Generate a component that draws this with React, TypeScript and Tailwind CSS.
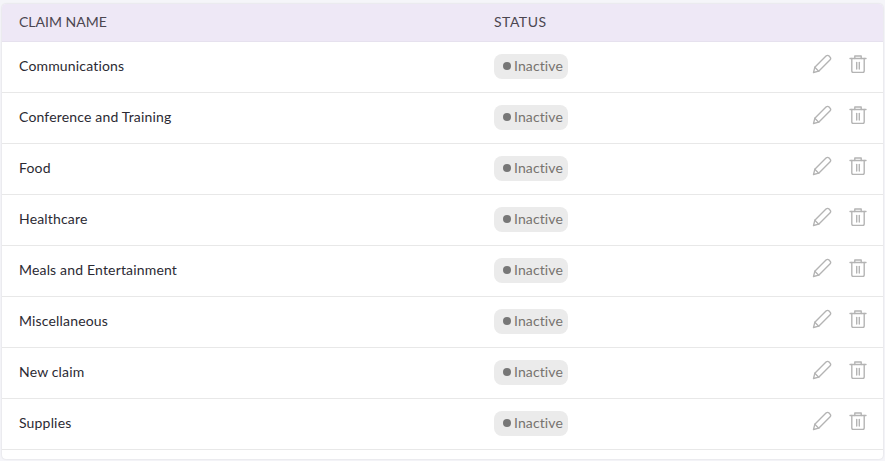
const claims = [
  "Communications",
  "Conference and Training",
  "Food",
  "Healthcare",
  "Meals and Entertainment",
  "Miscellaneous",
  "New claim",
  "Supplies",
];

function PencilIcon() {
  return (
    <svg width="20" height="20" viewBox="0 0 20 20" fill="none" stroke="#b4b4b4" strokeWidth="1.35" strokeLinejoin="round" strokeLinecap="round">
      <path d="M1.5 18.5l1.3-5.2L14 2.1c.9-.9 2.2-.9 3.1 0l.8.8c.9.9.9 2.2 0 3.1L6.7 17.2l-5.2 1.3z" />
      <path d="M2.8 13.3l3.9 3.9" />
    </svg>
  );
}

function TrashIcon() {
  return (
    <svg width="18" height="18" viewBox="0 0 18 18" fill="none" stroke="#b4b4b4" strokeWidth="1.4" strokeLinejoin="round" strokeLinecap="round">
      <path d="M1 3.5h16" />
      <path d="M5.8 3.5V1h6.4v2.5" />
      <path d="M2.8 3.5V16c0 .9.6 1.5 1.5 1.5h9.4c.9 0 1.5-.6 1.5-1.5V3.5" />
      <path d="M7.7 7.5V14" />
      <path d="M10.3 7.5V14" />
    </svg>
  );
}

export default function App() {
  return (
    <div className="w-[885px] h-[461px] overflow-hidden bg-[#f5f5f9] pt-[4px] pl-[2px] font-['Lato','Noto_Sans',sans-serif]">
      <div className="w-[881px] h-[455px] bg-white rounded-[4px] overflow-hidden shadow-[0_0_2px_rgba(0,0,0,0.15)]">
        <div className="flex items-center h-[38px] pb-[2px] bg-[#eee8f6] border-b border-[#e6e1ee] text-sm text-[#4b4650]">
          <div className="w-[475px] pl-[17px]">CLAIM NAME</div>
          <div className="pl-[17px] tracking-[0.5px]">STATUS</div>
        </div>
        {claims.map((name) => (
          <div key={name} className="flex items-center h-[51px] border-b border-[#e8e8e8]">
            <div className="w-[475px] pl-[17px] pb-[2px] text-sm tracking-[0.17px] text-[#2b2a33]">{name}</div>
            <div className="flex flex-1 pl-[17px] pb-[2px]">
              <span className="flex items-center gap-[3px] h-[25px] w-[74px] pl-[9px] rounded-[8px] bg-[#ebebeb] text-sm tracking-[0.1px] text-[#77736f]">
                <span className="w-[8px] h-[8px] rounded-full bg-[#777]" />
                Inactive
              </span>
            </div>
            <div className="flex items-center gap-[17px] pr-[16px] -mt-[6px]">
              <PencilIcon />
              <TrashIcon />
            </div>
          </div>
        ))}
      </div>
    </div>
  );
}
